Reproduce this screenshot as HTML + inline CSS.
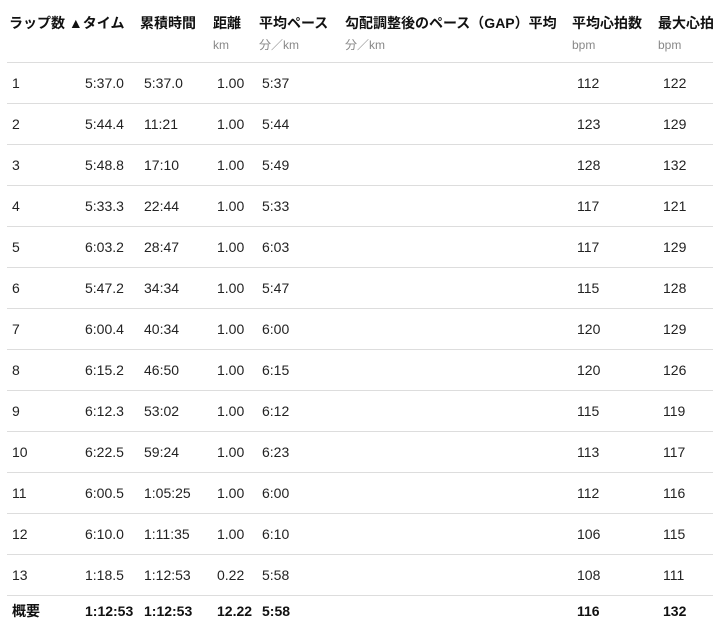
<!DOCTYPE html>
<html><head><meta charset="utf-8"><style>
*{margin:0;padding:0;box-sizing:border-box}
body{width:713px;height:633px;background:#fff;position:relative;overflow:hidden;font-family:"Liberation Sans","Noto Sans CJK JP",sans-serif;color:#222;font-size:14px}
.h{position:absolute;top:14px;font-weight:bold;font-size:14px;white-space:nowrap;line-height:18px;color:#111}
.u{position:absolute;top:37px;font-size:12px;color:#888;white-space:nowrap;line-height:16px}
.line{position:absolute;left:7px;right:0;height:1px;background:#ddd}
.r{position:absolute;left:0;width:713px;height:41px;line-height:41px}
.r span{position:absolute;top:0;white-space:nowrap}
.a{left:12px}.b{left:85px}.c{left:144px}.d{left:217px}.e{left:262px}.f{left:577px}.g{left:663px}
.s{font-weight:bold;color:#111}
</style></head><body>
<div class="h" style="left:9px">ラップ数 ▲タイム</div>
<div class="h" style="left:140px">累積時間</div>
<div class="h" style="left:213px">距離</div>
<div class="h" style="left:259px">平均ペース</div>
<div class="h" style="left:345px">勾配調整後のペース（GAP）平均</div>
<div class="h" style="left:572px">平均心拍数</div>
<div class="h" style="left:658px">最大心拍数</div>
<div class="u" style="left:213px">km</div>
<div class="u" style="left:259px">分／km</div>
<div class="u" style="left:345px">分／km</div>
<div class="u" style="left:572px">bpm</div>
<div class="u" style="left:658px">bpm</div>

<div class="line" style="top:62px"></div>
<div class="line" style="top:103px"></div>
<div class="line" style="top:144px"></div>
<div class="line" style="top:185px"></div>
<div class="line" style="top:226px"></div>
<div class="line" style="top:267px"></div>
<div class="line" style="top:308px"></div>
<div class="line" style="top:349px"></div>
<div class="line" style="top:390px"></div>
<div class="line" style="top:431px"></div>
<div class="line" style="top:472px"></div>
<div class="line" style="top:513px"></div>
<div class="line" style="top:554px"></div>
<div class="line" style="top:595px"></div>

<div class="r" style="top:63px"><span class="a">1</span><span class="b">5:37.0</span><span class="c">5:37.0</span><span class="d">1.00</span><span class="e">5:37</span><span class="f">112</span><span class="g">122</span></div>
<div class="r" style="top:104px"><span class="a">2</span><span class="b">5:44.4</span><span class="c">11:21</span><span class="d">1.00</span><span class="e">5:44</span><span class="f">123</span><span class="g">129</span></div>
<div class="r" style="top:145px"><span class="a">3</span><span class="b">5:48.8</span><span class="c">17:10</span><span class="d">1.00</span><span class="e">5:49</span><span class="f">128</span><span class="g">132</span></div>
<div class="r" style="top:186px"><span class="a">4</span><span class="b">5:33.3</span><span class="c">22:44</span><span class="d">1.00</span><span class="e">5:33</span><span class="f">117</span><span class="g">121</span></div>
<div class="r" style="top:227px"><span class="a">5</span><span class="b">6:03.2</span><span class="c">28:47</span><span class="d">1.00</span><span class="e">6:03</span><span class="f">117</span><span class="g">129</span></div>
<div class="r" style="top:268px"><span class="a">6</span><span class="b">5:47.2</span><span class="c">34:34</span><span class="d">1.00</span><span class="e">5:47</span><span class="f">115</span><span class="g">128</span></div>
<div class="r" style="top:309px"><span class="a">7</span><span class="b">6:00.4</span><span class="c">40:34</span><span class="d">1.00</span><span class="e">6:00</span><span class="f">120</span><span class="g">129</span></div>
<div class="r" style="top:350px"><span class="a">8</span><span class="b">6:15.2</span><span class="c">46:50</span><span class="d">1.00</span><span class="e">6:15</span><span class="f">120</span><span class="g">126</span></div>
<div class="r" style="top:391px"><span class="a">9</span><span class="b">6:12.3</span><span class="c">53:02</span><span class="d">1.00</span><span class="e">6:12</span><span class="f">115</span><span class="g">119</span></div>
<div class="r" style="top:432px"><span class="a">10</span><span class="b">6:22.5</span><span class="c">59:24</span><span class="d">1.00</span><span class="e">6:23</span><span class="f">113</span><span class="g">117</span></div>
<div class="r" style="top:473px"><span class="a">11</span><span class="b">6:00.5</span><span class="c">1:05:25</span><span class="d">1.00</span><span class="e">6:00</span><span class="f">112</span><span class="g">116</span></div>
<div class="r" style="top:514px"><span class="a">12</span><span class="b">6:10.0</span><span class="c">1:11:35</span><span class="d">1.00</span><span class="e">6:10</span><span class="f">106</span><span class="g">115</span></div>
<div class="r" style="top:555px"><span class="a">13</span><span class="b">1:18.5</span><span class="c">1:12:53</span><span class="d">0.22</span><span class="e">5:58</span><span class="f">108</span><span class="g">111</span></div>
<div class="r s" style="top:591px"><span class="a">概要</span><span class="b">1:12:53</span><span class="c">1:12:53</span><span class="d">12.22</span><span class="e">5:58</span><span class="f">116</span><span class="g">132</span></div>
</body></html>
